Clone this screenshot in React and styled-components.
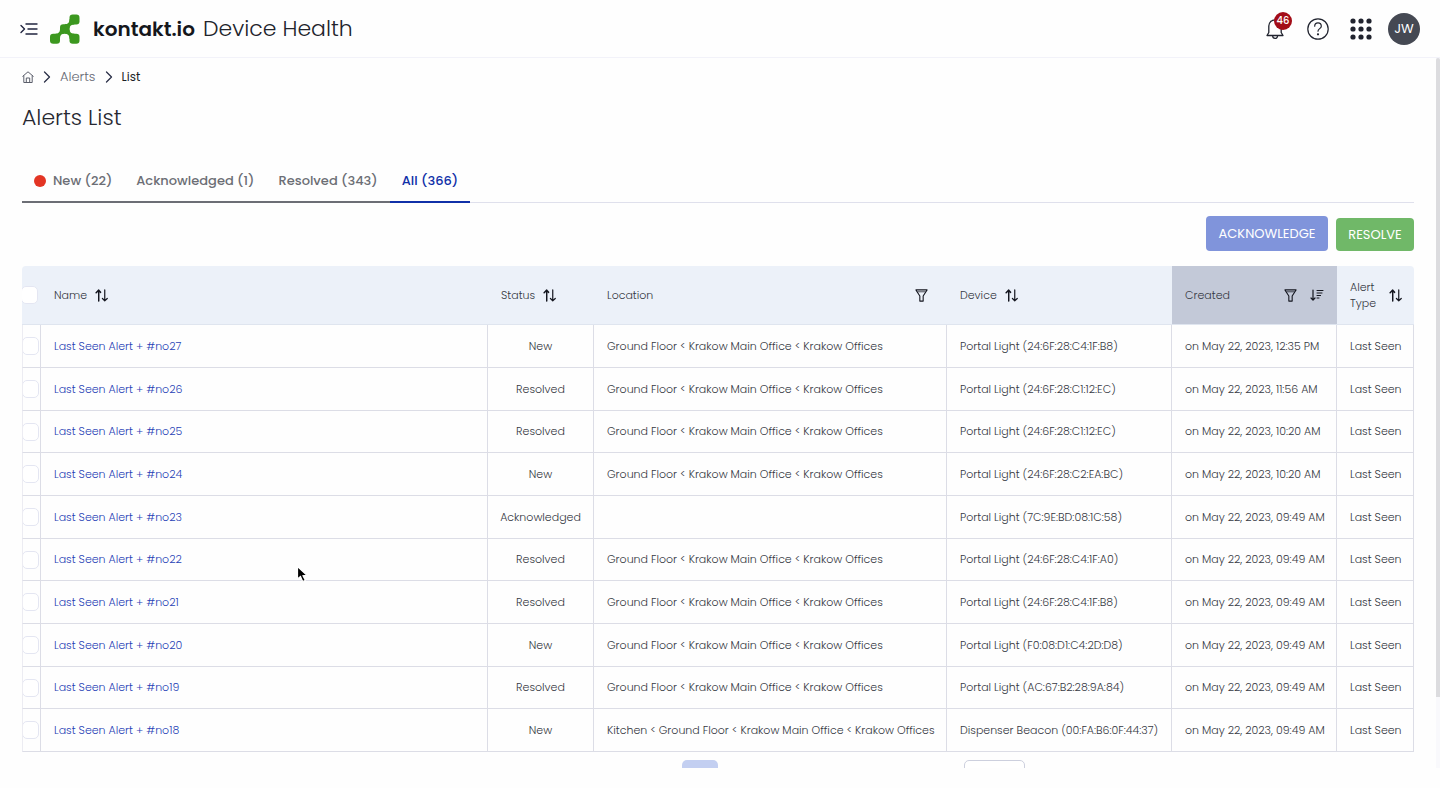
import React from 'react';
import styled, { createGlobalStyle, css } from 'styled-components';

const alerts = [
    { name: 'Last Seen Alert + #no27', status: 'New', device: 'Portal Light (24:6F:28:C4:1F:B8)', created: 'on May 22, 2023, 12:35 PM' },
    { name: 'Last Seen Alert + #no26', status: 'Resolved', device: 'Portal Light (24:6F:28:C1:12:EC)', created: 'on May 22, 2023, 11:56 AM' },
    { name: 'Last Seen Alert + #no25', status: 'Resolved', device: 'Portal Light (24:6F:28:C1:12:EC)', created: 'on May 22, 2023, 10:20 AM' },
    { name: 'Last Seen Alert + #no24', status: 'New', device: 'Portal Light (24:6F:28:C2:EA:BC)', created: 'on May 22, 2023, 10:20 AM' },
    { name: 'Last Seen Alert + #no23', status: 'Acknowledged', location: '', device: 'Portal Light (7C:9E:BD:08:1C:58)', created: 'on May 22, 2023, 09:49 AM' },
    { name: 'Last Seen Alert + #no22', status: 'Resolved', device: 'Portal Light (24:6F:28:C4:1F:A0)', created: 'on May 22, 2023, 09:49 AM' },
    { name: 'Last Seen Alert + #no21', status: 'Resolved', device: 'Portal Light (24:6F:28:C4:1F:B8)', created: 'on May 22, 2023, 09:49 AM' },
    { name: 'Last Seen Alert + #no20', status: 'New', device: 'Portal Light (F0:08:D1:C4:2D:D8)', created: 'on May 22, 2023, 09:49 AM' },
    { name: 'Last Seen Alert + #no19', status: 'Resolved', device: 'Portal Light (AC:67:B2:28:9A:84)', created: 'on May 22, 2023, 09:49 AM' },
    { name: 'Last Seen Alert + #no18', status: 'New', location: 'Kitchen < Ground Floor < Krakow Main Office < Krakow Offices', device: 'Dispenser Beacon (00:FA:B6:0F:44:37)', created: 'on May 22, 2023, 09:49 AM' },
];

const defaultLocation = 'Ground Floor < Krakow Main Office < Krakow Offices';

const SortIcon = () => (
    <svg width="13" height="13" viewBox="0 0 14 14" fill="none" stroke="#14161f" strokeLinecap="round" strokeLinejoin="round">
        <path d="M4 13V1.5M1.2 4 4 1.2 6 3.6" strokeWidth="1.6" />
        <path d="M10.5 1v11.5M8 10.2l2.5 2.5 2.7-2.5" strokeWidth="1.3" />
    </svg>
);

const SortDescIcon = () => (
    <svg width="14" height="14" viewBox="0 0 14 14" fill="none" stroke="#14161f" strokeLinecap="round" strokeLinejoin="round">
        <path d="M3 2v10M1 10l2 2.2L5 10" strokeWidth="1.2" />
        <path d="M7 2.500h6M7 5h5M7 7.500h3.600M7 10h2" strokeWidth="1" />
    </svg>
);

const FilterIcon = () => (
    <svg width="13" height="13" viewBox="0 0 14 14" fill="none" stroke="#14161f" strokeWidth="1.2" strokeLinejoin="round">
        <path d="M1 1h12L8.800 7.500v5.500H5.200V7.500z" />
        <path d="M2.500 3h9" strokeWidth="0.8" />
    </svg>
);

const Chevron = () => (
    <svg width="8" height="12" viewBox="0 0 8 12" fill="none" stroke="#2b3048" strokeWidth="1.3" strokeLinecap="round" strokeLinejoin="round">
        <path d="m1.500 1 5 5-5 5" />
    </svg>
);

const Logo = () => (
    <svg width="30" height="30" viewBox="0 0 30 30" fill="#3c981f">
        <rect x="19.5" y="0.5" width="10" height="10" rx="3.2" />
        <rect x="10" y="10.2" width="9.6" height="9.6" rx="3.2" />
        <rect x="19.5" y="19.7" width="10" height="10" rx="3.2" />
        <rect x="0" y="19.7" width="10" height="10" rx="3.2" />
        <path d="M19.500 5c0 3.500-1.500 5.200-5 5.200l5 4.300c0-2.800 2-4 5-4z" />
        <path d="M19.500 25c0-3.500-1.500-5.200-5-5.200l5-4.300c0 2.800 2 4.200 5 4.200z" />
        <path d="M10 15.500c0 2.700-1.600 4.200-4.500 4.200L10 24c0-2.700 1.500-4.200 4.500-4.200z" />
    </svg>
);

const App = () => {
    return (
        <Page>
            <GlobalStyle />
            <TopBar>
                <IconButton aria-label="Open menu">
                    <svg width="18" height="14" viewBox="0 0 18 14" fill="none" stroke="#20243f" strokeWidth="1.4" strokeLinecap="round" strokeLinejoin="round">
                        <path d="m1 3.500 3.500 3.500L1 10.500M6 2h11M8 7h9M6 12h11" />
                    </svg>
                </IconButton>
                <Brand href="#">
                    <Logo />
                    <BrandName>kontakt.io</BrandName>
                </Brand>
                <Product>Device Health</Product>
                <Actions>
                    <IconButton aria-label="Notifications">
                        <svg width="22" height="24" viewBox="0 0 22 24" fill="none" stroke="#20232e" strokeWidth="1.3" strokeLinejoin="round">
                            <path d="M3 18.500h16l-1.800-3V9a6.200 6.200 0 0 0-12.400 0v6.500z" />
                            <path d="M8.700 19a2.400 2.400 0 0 0 4.800 0" />
                        </svg>
                        <Badge>46</Badge>
                    </IconButton>
                    <IconButton aria-label="Help">
                        <svg width="22" height="22" viewBox="0 0 22 22" fill="none" stroke="#20232e" strokeWidth="1.2" strokeLinecap="round">
                            <circle cx="11" cy="11" r="10.200" />
                            <path d="M7.700 8.200a3.300 3.300 0 0 1 6.600 0c0 2.400-3.300 2.500-3.300 5" />
                            <circle cx="11" cy="16.300" r="0.500" fill="#20232e" />
                        </svg>
                    </IconButton>
                    <IconButton aria-label="Applications">
                        <svg width="22" height="22" viewBox="0 0 22 22" fill="#20232e">
                            {[3, 11, 19].map((y) => [3, 11, 19].map((x) => (
                                <circle key={x + '-' + y} cx={x} cy={y} r="2.600" />
                            )))}
                        </svg>
                    </IconButton>
                    <Avatar>JW</Avatar>
                </Actions>
            </TopBar>

            <Body>
                <Main>
                    <Breadcrumbs aria-label="Breadcrumb">
                        <a href="#" aria-label="Home">
                            <svg width="12" height="12" viewBox="0 0 12 12" fill="none" stroke="#5b5e6b" strokeWidth="1" strokeLinejoin="round">
                                <path d="M0.500 5.500 6 0.800l5.500 4.700M1.800 4.500v7h8.400v-7M4.300 11.500v-4.500h3.400v4.500" />
                            </svg>
                        </a>
                        <Chevron />
                        <a href="#">Alerts</a>
                        <Chevron />
                        <Current>List</Current>
                    </Breadcrumbs>
                    <Title>Alerts List</Title>

                    <Tabs>
                        <Tab><Dot />New (22)</Tab>
                        <Tab>Acknowledged (1)</Tab>
                        <Tab>Resolved (343)</Tab>
                        <Tab $active>All (366)</Tab>
                    </Tabs>

                    <Toolbar>
                        <Action $large>ACKNOWLEDGE</Action>
                        <Action $green>RESOLVE</Action>
                    </Toolbar>

                    <Table>
                        <colgroup>
                            <Col $width="19px" />
                            <Col />
                            <Col $width="106px" />
                            <Col $width="353px" />
                            <Col $width="225px" />
                            <Col $width="165px" />
                            <Col $width="77px" />
                        </colgroup>
                        <thead>
                            <tr>
                                <HeadCell $check><Check type="checkbox" aria-label="Select all" /></HeadCell>
                                <HeadCell><HeadContent>Name<SortIcon /></HeadContent></HeadCell>
                                <HeadCell><HeadContent>Status<SortIcon /></HeadContent></HeadCell>
                                <HeadCell><HeadContent $spread $inset><span>Location</span><FilterIcon /></HeadContent></HeadCell>
                                <HeadCell><HeadContent>Device<SortIcon /></HeadContent></HeadCell>
                                <HeadCell $sorted><HeadContent $spread><span>Created</span><FilterIcon /><SortDescIcon /></HeadContent></HeadCell>
                                <HeadCell><HeadContent $spread><span>Alert Type</span><SortIcon /></HeadContent></HeadCell>
                            </tr>
                        </thead>
                        <tbody>
                            {alerts.map((alert) => (
                                <Row key={alert.name}>
                                    <Cell $check><Check type="checkbox" aria-label={'Select ' + alert.name} /></Cell>
                                    <Cell><a href="#">{alert.name}</a></Cell>
                                    <Cell $center>{alert.status}</Cell>
                                    <Cell>{alert.location ?? defaultLocation}</Cell>
                                    <Cell>{alert.device}</Cell>
                                    <Cell>{alert.created}</Cell>
                                    <Cell>Last Seen</Cell>
                                </Row>
                            ))}
                        </tbody>
                    </Table>

                    <Pagination>
                        <Pages><PageButton aria-label="Page 1" /></Pages>
                        <PageSize aria-label="Rows per page"><option>10</option></PageSize>
                    </Pagination>
                </Main>
                <Track><Thumb /></Track>
            </Body>

            <Pointer width="14" height="20" viewBox="0 0 14 20">
                <path d="M1.500 1.500v12.500l3-2.500 2.200 5 2.600-1.200-2.300-4.600 4-.3z" fill="#000" stroke="#fff" strokeWidth="1.200" />
            </Pointer>
        </Page>
    );
};

const GlobalStyle = createGlobalStyle`
* {
    box-sizing: border-box;
}

body {
    margin: 0;
    background: #fefefe;
    color: #343741;
    font-family: Poppins, Inter, sans-serif;
    font-size: 11px;
    font-weight: 300;
}

button, select {
    font-family: inherit;
}

a {
    color: inherit;
    text-decoration: none;
}

svg {
    display: block;
    flex: none;
}
`;

const Page = styled.div`
    display: flex;
    flex-direction: column;
    height: 100vh;
    padding-bottom: 20px;
    overflow: hidden;
`;

const TopBar = styled.header`
    display: flex;
    align-items: center;
    flex: none;
    height: 58px;
    padding: 0 20px;
    border-bottom: 1px solid #f2f2f9;
`;

const IconButton = styled.button`
    position: relative;
    padding: 0;
    border: 0;
    background: none;
    cursor: pointer;
`;

const Brand = styled.a`
    display: flex;
    align-items: center;
    gap: 13px;
    margin-left: 12px;
    color: #15171c;
`;

const BrandName = styled.span`
    font-size: 20px;
    font-weight: 600;
    line-height: 24px;
`;

const Product = styled.span`
    margin-left: 8px;
    color: #22242c;
    font-size: 22px;
    line-height: 24px;
`;

const Actions = styled.div`
    display: flex;
    align-items: center;
    gap: 21px;
    margin-left: auto;
`;

const Badge = styled.span`
    position: absolute;
    top: -5px;
    right: -6px;
    width: 18px;
    height: 18px;
    border-radius: 50%;
    background: #a30d18;
    color: #fff;
    font-size: 10px;
    font-weight: 500;
    line-height: 18px;
    text-align: center;
`;

const Avatar = styled.button`
    width: 32px;
    height: 32px;
    padding: 0;
    margin-left: -5px;
    border: 0;
    border-radius: 50%;
    background: #454953;
    color: #fff;
    font-size: 13px;
`;

const Body = styled.div`
    display: flex;
    flex: 1;
    min-height: 0;
`;

const Main = styled.main`
    flex: 1;
    min-width: 0;
    padding: 10px 22px 0;
    overflow: hidden;
`;

const Track = styled.div`
    flex: none;
    width: 4px;
    background: #f9f9fc;
`;

const Thumb = styled.div`
    height: 90%;
    border-radius: 4px 4px 0 0;
    background: #dcdcdf;
`;

const Breadcrumbs = styled.nav`
    display: flex;
    align-items: center;
    gap: 9px;
    height: 18px;
    color: #666974;
    font-size: 13px;
`;

const Current = styled.span`
    color: #1c1e27;
    font-size: 12px;
    font-weight: 400;
`;

const Title = styled.h1`
    margin: 17px 0 0;
    color: #262831;
    font-size: 22px;
    font-weight: 300;
    line-height: 30px;
`;

const Tabs = styled.div`
    display: flex;
    margin-top: 28px;
    border-bottom: 1px solid #dfe0ec;
`;

const Tab = styled.button`
    display: flex;
    align-items: center;
    height: 42px;
    margin-bottom: -1px;
    padding: 0 12px;
    border: 0;
    border-bottom: 2px solid ${(props) => (props.$active ? '#1030a8' : '#6c6e75')};
    background: none;
    color: ${(props) => (props.$active ? '#1030a8' : '#6c6e75')};
    font-size: 13px;
    font-weight: 500;
    cursor: pointer;
`;

const Dot = styled.span`
    width: 12px;
    height: 12px;
    margin-right: 7px;
    border-radius: 50%;
    background: #e33524;
`;

const Toolbar = styled.div`
    display: flex;
    justify-content: flex-end;
    align-items: flex-end;
    gap: 8px;
    margin: 13px 0 15px;
`;

const Action = styled.button`
    width: ${(props) => (props.$large ? '122px' : '78px')};
    height: ${(props) => (props.$large ? '35px' : '33px')};
    padding: 0;
    border: 0;
    border-radius: 4px;
    background: ${(props) => (props.$green ? '#70b868' : '#8094db')};
    color: #fff;
    font-size: 13px;
    font-weight: 400;
    cursor: pointer;
`;

const Table = styled.table`
    width: 100%;
    table-layout: fixed;
    border-collapse: separate;
    border-spacing: 0;
    border-radius: 4px 4px 0 0;
    overflow: hidden;
`;

const Col = styled.col`
    width: ${(props) => props.$width || 'auto'};
`;

const checkCell = css`
    padding: 0;
    overflow: hidden;
`;

const HeadCell = styled.th`
    height: 59px;
    padding: 0 13px;
    border-bottom: 1px solid #dfe5ef;
    background: ${(props) => (props.$sorted ? '#c3c9d8' : '#ecf1f9')};
    font-weight: 300;
    line-height: 16px;
    text-align: left;
    ${(props) => props.$check && checkCell}
`;

const HeadContent = styled.div`
    display: flex;
    align-items: center;
    gap: ${(props) => (props.$spread ? '13px' : '8px')};
    padding-right: ${(props) => (props.$inset ? '6px' : '0')};

    span {
        flex: 1;
    }
`;

const Row = styled.tr`
    height: 43px;

    &:nth-child(3n) {
        height: 42px;
    }
`;

const Cell = styled.td`
    padding: 0 0 0 13px;
    border-right: 1px solid #dcdde6;
    border-bottom: 1px solid #dcdde6;
    white-space: nowrap;
    text-align: left;

    &:first-child {
        border-left: 1px solid #ececf2;
    }

    a {
        color: #1f40b5;
    }

    ${(props) => props.$center && css`
        padding: 0;
        text-align: center;
    `}

    ${(props) => props.$check && checkCell}
`;

const Check = styled.input`
    display: block;
    appearance: none;
    width: 17px;
    height: 18px;
    margin: 0 0 0 -1px;
    border: 1px solid #e4e6f2;
    border-radius: 5px;
    background: #fff;
`;

const Pagination = styled.div`
    display: grid;
    grid-template-columns: 1fr 1fr;
    margin-top: 8px;
`;

const Pages = styled.div`
    display: flex;
    justify-content: flex-end;
`;

const PageButton = styled.button`
    width: 36px;
    height: 36px;
    border: 0;
    border-radius: 5px;
    background: #c3cff1;
`;

const PageSize = styled.select`
    width: 61px;
    height: 36px;
    margin-left: 246px;
    padding: 0 8px;
    border: 1px solid #cdd0de;
    border-radius: 5px;
    background: #fff;
    appearance: none;
`;

const Pointer = styled.svg`
    position: absolute;
    top: 565px;
    left: 296px;
    pointer-events: none;
`;

export default App;
